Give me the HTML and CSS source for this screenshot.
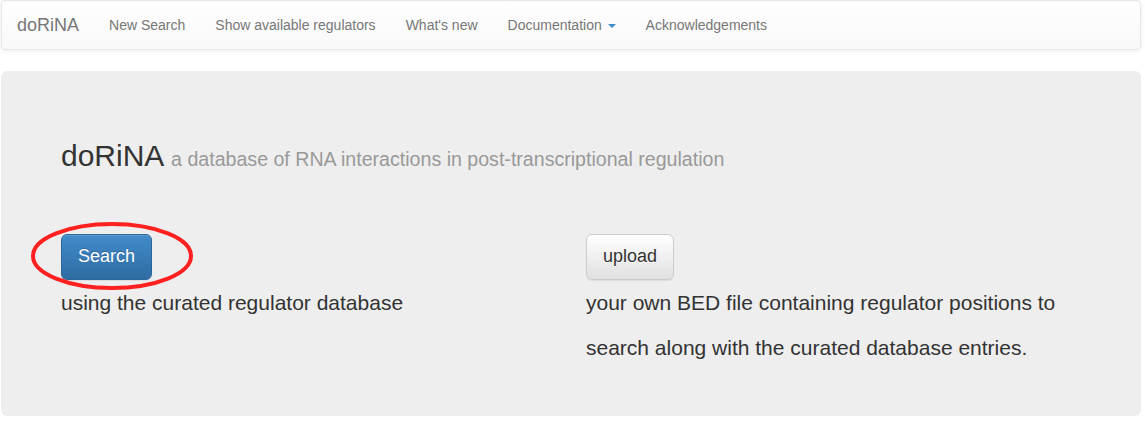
FILE: index.html
```html
<!DOCTYPE html>
<html>
<head>
<meta charset="utf-8">
<title>doRiNA</title>
<link rel="stylesheet" href="styles.css">
</head>
<body>
<nav class="navbar">
  <a class="brand" href="#">doRiNA</a>
  <ul class="nav">
    <li><a href="#">New Search</a></li>
    <li><a href="#">Show available regulators</a></li>
    <li><a href="#">What's new</a></li>
    <li><a href="#">Documentation <span class="caret"></span></a></li>
    <li><a href="#">Acknowledgements</a></li>
  </ul>
</nav>
<div class="jumbotron">
  <h2 class="title">doRiNA <small>a database of RNA interactions in post-transcriptional regulation</small></h2>
  <div class="row">
    <div class="col">
      <div class="btn-wrap">
        <button class="btn btn-primary">Search</button>
        <svg class="annot" width="170" height="76" viewBox="0 0 170 76"><ellipse cx="82" cy="35" rx="79" ry="32" fill="none" stroke="#ff2020" stroke-width="4"/></svg>
      </div>
      <p class="desc">using the curated regulator database</p>
    </div>
    <div class="col">
      <div class="btn-wrap">
        <button class="btn btn-default">upload</button>
      </div>
      <p class="desc">your own BED file containing regulator positions to search along with the curated database entries.</p>
    </div>
  </div>
</div>
</body>
</html>
```

FILE: styles.css
```css
* { box-sizing: border-box; }
html, body { margin: 0; padding: 0; }
body {
  font-family: "Liberation Sans", Arial, Helvetica, sans-serif;
  font-size: 14px;
  line-height: 1.42857;
  color: #333;
  background: #fff;
}
a { text-decoration: none; }

.navbar {
  display: flex;
  align-items: center;
  height: 50px;
  margin: 0 4px 21px 1px;
  border: 1px solid #e7e7e7;
  border-radius: 4px;
  background: linear-gradient(to bottom, #ffffff 0%, #f8f8f8 100%);
  box-shadow: inset 0 1px 0 rgba(255,255,255,.15), 0 1px 5px rgba(0,0,0,.075);
}
.brand {
  display: block;
  padding: 14px 15px;
  font-size: 18px;
  line-height: 20px;
  color: #777;
}
.nav {
  display: flex;
  list-style: none;
  margin: 0;
  padding: 0;
}
.nav a {
  display: block;
  padding: 14px 15px;
  line-height: 20px;
  color: #777;
}
.caret {
  display: inline-block;
  width: 0;
  height: 0;
  margin-left: 2px;
  vertical-align: middle;
  border-top: 4px solid #428bca;
  border-left: 4px solid transparent;
  border-right: 4px solid transparent;
}

.jumbotron {
  margin: 0 4px 0 1px;
  padding: 48px 60px;
  background: #eee;
  border-radius: 6px;
  height: 345px;
}
.title {
  margin: 20px 0 62px;
  font-size: 30px;
  font-weight: 500;
  line-height: 1.1;
  color: #333;
}
.title small {
  font-size: 19.6px;
  font-weight: 400;
  color: #999;
}
.row {
  display: grid;
  grid-template-columns: 1fr 1fr;
  column-gap: 30px;
}
.btn-wrap {
  position: relative;
  height: 46px;
}
.btn {
  display: inline-block;
  height: 46px;
  padding: 10px 16px;
  font-family: inherit;
  font-size: 18px;
  line-height: 1.33;
  border-radius: 6px;
  border: 1px solid transparent;
  cursor: pointer;
}
.btn-primary {
  color: #fff;
  background: linear-gradient(to bottom, #428bca 0%, #2d6ca2 100%);
  border-color: #2b669a;
  text-shadow: 0 -1px 0 rgba(0,0,0,.2);
  box-shadow: inset 0 1px 0 rgba(255,255,255,.15), 0 1px 1px rgba(0,0,0,.075);
}
.btn-default {
  color: #333;
  background: linear-gradient(to bottom, #ffffff 0%, #e0e0e0 100%);
  border-color: #ccc;
  text-shadow: 0 1px 0 #fff;
  box-shadow: inset 0 1px 0 rgba(255,255,255,.15), 0 1px 1px rgba(0,0,0,.075);
}
.annot {
  position: absolute;
  left: -31px;
  top: -13px;
  pointer-events: none;
}
.desc {
  margin: 0;
  font-size: 21px;
  line-height: 45px;
  font-weight: 200;
  color: #333;
}
```
